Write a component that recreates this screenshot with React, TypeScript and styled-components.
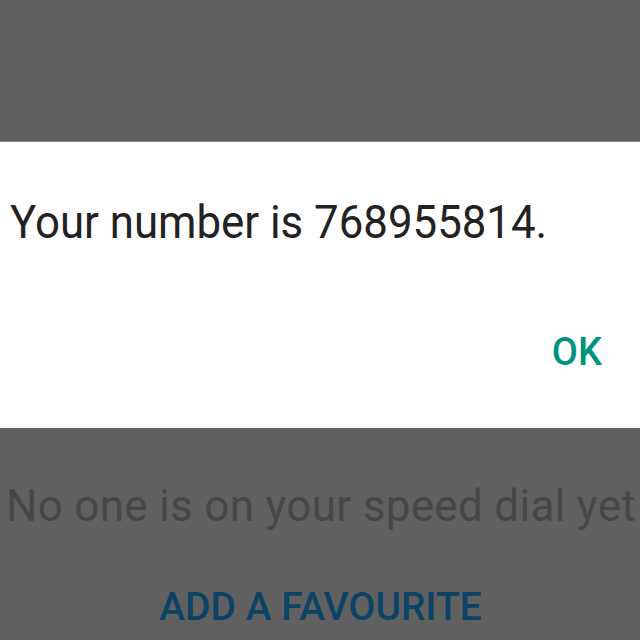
import React from "react";
import styled, { createGlobalStyle } from "styled-components";

const Global = createGlobalStyle`
  html, body { margin: 0; padding: 0; background: #5f5f5f; }
  body { font-family: Roboto, "Noto Sans", sans-serif; overflow: hidden; }
`;

const Screen = styled.div`
  width: 640px;
  height: 640px;
  background: #606060;
  display: flex;
  flex-direction: column;
  overflow: hidden;
`;

const Top = styled.div`
  height: 141px;
  flex: none;
  background: #5f5f5f;
  border-bottom: 1px solid #8a8a8a;
`;

const Dialog = styled.div`
  height: 286px;
  flex: none;
  background: #ffffff;
  display: flex;
  flex-direction: column;
  padding: 0 0 0 10px;
  box-sizing: border-box;
`;

const Message = styled.div`
  margin-top: 50px;
  font-size: 46px;
  line-height: 60px;
  color: #222222;
  white-space: nowrap;
  transform: scaleX(0.952);
  transform-origin: left center;
`;

const Actions = styled.div`
  display: flex;
  justify-content: flex-end;
  padding-right: 38px;
  margin-top: 80px;
`;

const OkButton = styled.div`
  font-size: 38px;
  font-weight: 500;
  color: #00937f;
  line-height: 40px;
`;

const Below = styled.div`
  flex: 1;
  display: flex;
  flex-direction: column;
  align-items: center;
  background: #606060;
`;

const Empty = styled.div`
  margin-top: 53px;
  font-size: 44px;
  letter-spacing: 0.3px;
  line-height: 50px;
  color: #474747;
  white-space: nowrap;
  padding-left: 2px;
`;

const AddButton = styled.div`
  margin-top: 54px;
  font-size: 39px;
  font-weight: 500;
  line-height: 44px;
  color: #0c4264;
  padding-left: 1px;
`;

export default function App() {
  return (
    <>
      <Global />
      <Screen>
        <Top />
        <Dialog>
          <Message>Your number is 768955814.</Message>
          <Actions>
            <OkButton>OK</OkButton>
          </Actions>
        </Dialog>
        <Below>
          <Empty>No one is on your speed dial yet</Empty>
          <AddButton>ADD A FAVOURITE</AddButton>
        </Below>
      </Screen>
    </>
  );
}
